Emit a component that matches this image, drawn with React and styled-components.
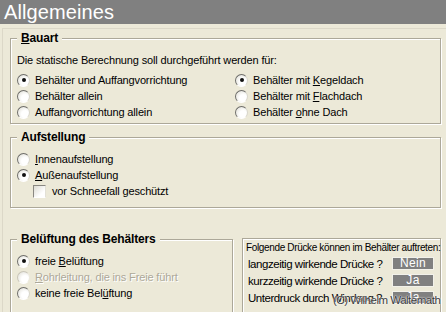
import styled, { createGlobalStyle } from "styled-components";

const GlobalStyle = createGlobalStyle`
  html, body {
    margin: 0;
    padding: 0;
    background: #ece9d8;
  }
  body {
    font-family: "Liberation Sans", Arial, sans-serif;
    font-size: 11px;
    letter-spacing: -0.15px;
    color: #000;
  }
`;

const Screen = styled.div`
  position: relative;
  width: 446px;
  height: 312px;
  overflow: hidden;
  background: #ece9d8;
`;

const TitleBar = styled.div`
  height: 24px;
  box-sizing: border-box;
  padding: 1px 0 0 4px;
  background: #808080;
  color: #fff;
  font-size: 20px;
  line-height: 23px;
  letter-spacing: 0.1px;
`;

const Panel = styled.div`
  margin: 4px 0 0 2px;
  border-top: 1px solid #dcd8c8;
  border-left: 1px solid #dcd8c8;
  padding: 0 5px 0 7px;
  height: 300px;
`;

const GroupBox = styled.div`
  position: relative;
  margin-top: ${(p) => p.$mt}px;
  padding: ${(p) => p.$pt}px 6px ${(p) => p.$pb}px 6px;
  border: 1px solid #aca899;
  box-shadow: inset 1px 1px 0 #fff, 1px 1px 0 #fff;
  width: ${(p) => (p.$w ? p.$w + "px" : "auto")};
  box-sizing: border-box;
`;

const Caption = styled.span`
  position: absolute;
  top: -8px;
  left: 6px;
  padding: 0 4px;
  background: #ece9d8;
  font-weight: bold;
  font-size: 12px;
  line-height: 14px;
`;

const Intro = styled.div`
  line-height: 14px;
  margin-bottom: 5px;
`;

const OptionGrid = styled.div`
  display: grid;
  grid-template-columns: 218px 1fr;
  grid-auto-flow: column;
  grid-template-rows: repeat(3, 16px);
`;

const OptionList = styled.div`
  display: flex;
  flex-direction: column;
`;

const Option = styled.label`
  display: flex;
  align-items: center;
  gap: 5px;
  height: 16px;
  padding-left: ${(p) => p.$indent || 0}px;
  color: ${(p) => (p.$disabled ? "#aca899" : "#000")};
  text-shadow: ${(p) => (p.$disabled ? "1px 1px 0 #fff" : "none")};
  white-space: nowrap;
`;

const Radio = styled.span`
  position: relative;
  flex: none;
  width: 13px;
  height: 13px;
  box-sizing: border-box;
  border-radius: 50%;
  border: 1px solid;
  border-color: ${(p) =>
    p.$disabled ? "#c8c5b8 #eceadf #fff #c8c5b8" : "#6e6e6a #d8d6cc #fff #6e6e6a"};
  background: radial-gradient(circle at 65% 65%, #fff 0 35%, #e4e3dc 85%);
  &::after {
    content: "";
    display: ${(p) => (p.$on ? "block" : "none")};
    position: absolute;
    left: 3.5px;
    top: 3.5px;
    width: 4px;
    height: 4px;
    border-radius: 50%;
    background: #111;
  }
`;

const Check = styled.span`
  flex: none;
  width: 13px;
  height: 13px;
  box-sizing: border-box;
  border: 1px solid;
  border-color: #8a8882 #e2e0d6 #fff #8a8882;
  background: linear-gradient(135deg, #dcdbd3, #fff 70%);
  margin-right: 1px;
`;

const BottomRow = styled.div`
  display: flex;
  align-items: flex-start;
  gap: 9px;
  margin-top: 30px;
`;

const InfoBox = styled.div`
  width: 199px;
  height: 90px;
  box-sizing: border-box;
  padding: 3px 6px 0 3px;
  border: 1px solid #aca899;
  box-shadow: inset 1px 1px 0 #fff, 1px 1px 0 #fff;
`;

const InfoHead = styled.div`
  font-size: 10px;
  line-height: 11px;
  letter-spacing: -0.35px;
  white-space: nowrap;
  margin-bottom: 2px;
`;

const InfoRow = styled.div`
  display: flex;
  align-items: center;
  height: 17px;
  padding-left: 2px;
  font-size: 11.5px;
  letter-spacing: -0.45px;
  white-space: nowrap;
`;

const Value = styled.span`
  margin-left: auto;
  width: 42px;
  height: 13px;
  box-sizing: border-box;
  border: 1px solid #f2f1ea;
  background: #808080;
  color: #fff;
  font-size: 12px;
  line-height: 11px;
  letter-spacing: 0.3px;
  text-align: center;
`;

const Copyright = styled.div`
  position: absolute;
  left: 333px;
  top: 293px;
  font-size: 11.5px;
  line-height: 15px;
  letter-spacing: -0.5px;
  color: #3c3c3c;
  text-shadow: 0 0 2px #fff, 0 0 1px #fff;
  white-space: nowrap;
`;

export default function App() {
  return (
    <Screen>
      <GlobalStyle />
      <TitleBar>Allgemeines</TitleBar>
      <Panel>
        <GroupBox $mt={9} $pt={14} $pb={3}>
          <Caption>
            <u>B</u>auart
          </Caption>
          <Intro>Die statische Berechnung soll durchgeführt werden für:</Intro>
          <OptionGrid>
            <Option>
              <Radio $on />
              Behälter und Auffangvorrichtung
            </Option>
            <Option>
              <Radio />
              Behälter allein
            </Option>
            <Option>
              <Radio />
              Auffangvorrichtung allein
            </Option>
            <Option>
              <Radio $on />
              <span>
                Behälter mit <u>K</u>egeldach
              </span>
            </Option>
            <Option>
              <Radio />
              <span>
                Behälter mit <u>F</u>lachdach
              </span>
            </Option>
            <Option>
              <Radio />
              <span>
                Behälter <u>o</u>hne Dach
              </span>
            </Option>
          </OptionGrid>
        </GroupBox>

        <GroupBox $mt={13} $pt={13} $pb={8}>
          <Caption>Aufstellung</Caption>
          <OptionList>
            <Option>
              <Radio />
              <span>
                <u>I</u>nnenaufstellung
              </span>
            </Option>
            <Option>
              <Radio $on />
              <span>
                <u>A</u>ußenaufstellung
              </span>
            </Option>
            <Option $indent={16}>
              <Check />
              vor Schneefall geschützt
            </Option>
          </OptionList>
        </GroupBox>

        <BottomRow>
          <GroupBox $mt={1} $pt={13} $pb={20} $w={223}>
            <Caption>Belüftung des Behälters</Caption>
            <OptionList>
              <Option>
                <Radio $on />
                <span>
                  freie <u>B</u>elüftung
                </span>
              </Option>
              <Option $disabled>
                <Radio $disabled />
                <span>
                  <u>R</u>ohrleitung, die ins Freie führt
                </span>
              </Option>
              <Option>
                <Radio />
                <span>
                  keine freie Bel<u>ü</u>ftung
                </span>
              </Option>
            </OptionList>
          </GroupBox>

          <InfoBox>
            <InfoHead>Folgende Drücke können im Behälter auftreten:</InfoHead>
            <InfoRow>
              langzeitig wirkende Drücke ?<Value>Nein</Value>
            </InfoRow>
            <InfoRow>
              kurzzeitig wirkende Drücke ?<Value>Ja</Value>
            </InfoRow>
            <InfoRow>
              Unterdruck durch Windsog ?<Value>Ja</Value>
            </InfoRow>
          </InfoBox>
        </BottomRow>
      </Panel>
      <Copyright>(C) Wilhelm Waltemath</Copyright>
    </Screen>
  );
}
